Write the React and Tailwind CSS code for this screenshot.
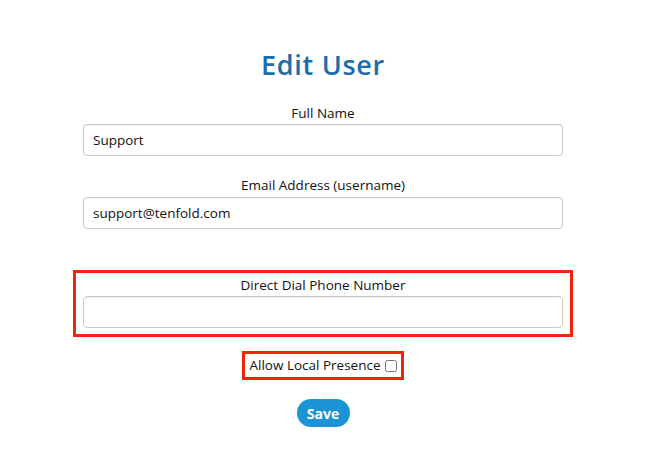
import { useState } from "react";

const Field = ({ label, value, onChange, gap = "mt-[3px]" }) => (
  <div className="flex flex-col">
    <label className="text-center text-[13.5px] leading-[16px] text-[#111]">{label}</label>
    <input
      className={`${gap} h-[32px] w-full rounded-[4px] border border-[#c9c9c9] bg-white px-[9px] text-[13.5px] text-[#111] shadow-[inset_0_1px_1px_rgba(0,0,0,0.06)] outline-none`}
      value={value}
      onChange={(e) => onChange(e.target.value)}
    />
  </div>
);

const App = () => {
  const [name, setName] = useState("Support");
  const [email, setEmail] = useState("support@tenfold.com");
  const [phone, setPhone] = useState("");
  const [localPresence, setLocalPresence] = useState(false);

  return (
    <main
      className="min-h-screen w-full bg-white"
      style={{ fontFamily: '"Open Sans", "DejaVu Sans", sans-serif' }}
    >
      <div className="mx-auto flex w-[480px] flex-col pt-[49px]">
        {/* title */}
        <h1 className="text-center text-[27px] font-semibold leading-[32px] tracking-[0.7px] text-[#1a6cab]">
          Edit User
        </h1>

        <div className="mt-[24px]">
          <Field label="Full Name" value={name} onChange={setName} />
        </div>
        <div className="mt-[21px]">
          <Field label="Email Address (username)" value={email} onChange={setEmail} gap="mt-[4px]" />
        </div>

        {/* highlighted phone field */}
        <div className="-mx-[10px] mt-[41px] border-[3px] border-[#f4230b] px-[7px] pt-[4px] pb-[6px]">
          <Field label="Direct Dial Phone Number" value={phone} onChange={setPhone} />
        </div>

        {/* local presence */}
        <div className="mt-[14px] flex justify-center">
          <label className="flex h-[29px] items-center gap-[4px] border-[3px] border-[#f4230b] px-[4px] text-[13.5px] text-[#111]">
            Allow Local Presence
            <input
              type="checkbox"
              checked={localPresence}
              onChange={(e) => setLocalPresence(e.target.checked)}
              className="h-[12px] w-[12px]"
            />
          </label>
        </div>

        <div className="mt-[19px] flex justify-center">
          <button className="h-[28px] w-[53px] rounded-full bg-[#1b93d5] text-[14px] font-bold text-white">
            Save
          </button>
        </div>
      </div>
    </main>
  );
};
export default App;
